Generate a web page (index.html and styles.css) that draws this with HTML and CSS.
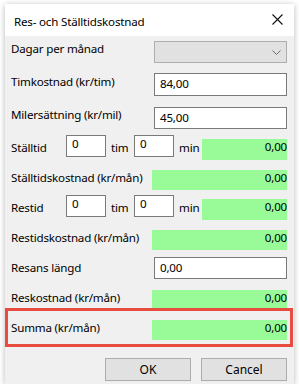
FILE: index.html
```html
<!DOCTYPE html>
<html lang="sv">
<head>
    <meta charset="UTF-8">
    <meta name="viewport" content="width=device-width, initial-scale=1.0">
    <title>Res- och Ställtidskostnad</title>
    <link rel="stylesheet" href="styles.css">
</head>
<body>

    <div class="window">
        <div class="titlebar">
            <span class="title">Res- och Ställtidskostnad</span>
            <svg class="close" width="11" height="11" viewBox="0 0 11 11">
                <path d="M0.5 0.5 L10.5 10.5 M10.5 0.5 L0.5 10.5" stroke="#111" stroke-width="1.1" fill="none"/>
            </svg>
        </div>

        <div class="content">
            <div class="row r-dagar">
                <span class="label up">Dagar per månad</span>
                <div class="combo">
                    <svg width="9" height="5" viewBox="0 0 9 5">
                        <polyline points="0.5,0.5 4.5,4.5 8.5,0.5" stroke="#6d6d6d" fill="none"/>
                    </svg>
                </div>
            </div>

            <div class="row r-tim">
                <span class="label up">Timkostnad (kr/tim)</span>
                <div class="field wide">84,00</div>
            </div>

            <div class="row r-mil">
                <span class="label up">Milersättning (kr/mil)</span>
                <div class="field wide">45,00</div>
            </div>

            <div class="row time r-stall">
                <span class="label short">Ställtid</span>
                <div class="field small">0</div>
                <span class="unit">tim</span>
                <div class="field small">0</div>
                <span class="unit">min</span>
                <div class="result time-result">0,00</div>
            </div>

            <div class="row r-stallkost">
                <span class="label">Ställtidskostnad (kr/mån)</span>
                <div class="result">0,00</div>
            </div>

            <div class="row time r-restid">
                <span class="label short">Restid</span>
                <div class="field small">0</div>
                <span class="unit">tim</span>
                <div class="field small">0</div>
                <span class="unit">min</span>
                <div class="result time-result">0,00</div>
            </div>

            <div class="row r-reskost">
                <span class="label">Restidskostnad (kr/mån)</span>
                <div class="result">0,00</div>
            </div>

            <div class="row r-langd">
                <span class="label">Resans längd</span>
                <div class="field wide">0,00</div>
            </div>

            <div class="row r-kost">
                <span class="label">Reskostnad (kr/mån)</span>
                <div class="result">0,00</div>
            </div>

            <div class="row summa">
                <span class="label">Summa (kr/mån)</span>
                <div class="result">0,00</div>
            </div>

            <div class="buttons">
                <button class="btn">OK</button>
                <button class="btn">Cancel</button>
            </div>
        </div>
    </div>

</body>
</html>
```

FILE: styles.css
```css
body {
    margin: 0;
    background: #ffffff;
    font-family: 'Segoe UI', 'Noto Sans', sans-serif;
    font-size: 11.6px;
    letter-spacing: -0.2px;
    color: #000;
}
.window {
    width: 289px;
    height: 380px;
    margin: 4px 0 0 5px;
    background: #f0f0f0;
    box-shadow: 0px 1px 6px rgba(0, 0, 0, 0.28);
    display: flex;
    flex-direction: column;
}
.titlebar {
    height: 32px;
    flex: none;
    background: #ffffff;
    display: flex;
    align-items: center;
    justify-content: space-between;
    padding: 2px 11px 0 9px;
    box-sizing: border-box;
}
.close {
    margin-top: -3px;
}
.content {
    padding: 0 7px 0 6px;
    display: flex;
    flex-direction: column;
}
.row {
    display: flex;
    align-items: center;
    justify-content: space-between;
    position: relative;
    height: 20px;
    flex: none;
}
.label {
    white-space: nowrap;
    line-height: 16px;
    margin-bottom: 4px;
}
.label.up {
    margin-bottom: 6px;
}
.label.short {
    width: 55px;
    margin-bottom: 0;
}
.combo {
    width: 133px;
    height: 22px;
    box-sizing: border-box;
    background: #e1e1e1;
    border: 1px solid #adadad;
    display: flex;
    align-items: center;
    justify-content: flex-end;
    padding-right: 5px;
}
.field {
    box-sizing: border-box;
    background: #ffffff;
    border: 1px solid #7a7a7a;
    padding: 2px 5px 0;
    line-height: 16px;
}
.field.wide {
    width: 133px;
    height: 23px;
}
.field.small {
    width: 40px;
    height: 22px;
    padding-top: 0;
}
.unit {
    width: 23px;
    padding-left: 5px;
    line-height: 16px;
}
.result {
    width: 135px;
    height: 20px;
    box-sizing: border-box;
    background: #98fb98;
    text-align: right;
    line-height: 16px;
}
.row.time {
    justify-content: flex-start;
    align-items: flex-start;
    height: 25px;
}
.row.time .label,
.row.time .unit {
    align-self: center;
}
.time-result {
    width: 85px;
    height: 21px;
    margin: 4px -1px 0 0;
}

.r-dagar { margin-top: 5px; height: 22px; }
.r-tim { margin-top: 10px; height: 23px; }
.r-mil { margin-top: 11px; height: 22px; }
.r-mil .field.wide { height: 22px; }
.r-stall { margin-top: 6px; }
.r-stallkost { margin-top: 10px; }
.r-restid { margin-top: 5px; }
.r-reskost { margin-top: 10px; }
.r-langd { margin-top: 7px; height: 22px; }
.r-langd .field.wide { height: 22px; }
.r-langd .label { margin-bottom: 0; }
.r-kost { margin-top: 11px; }
.summa { margin-top: 10px; }

.summa::after {
    content: '';
    position: absolute;
    left: -6px;
    right: -6px;
    top: -12px;
    bottom: -7px;
    border: 3px solid #e84c3f;
}

.buttons {
    margin-top: 18px;
    display: flex;
    justify-content: flex-end;
    gap: 10px;
}
.btn {
    width: 86px;
    height: 23px;
    background: #e1e1e1;
    border: 1px solid #adadad;
    font-family: inherit;
    font-size: 12px;
    color: #000;
    padding: 0;
}
```
